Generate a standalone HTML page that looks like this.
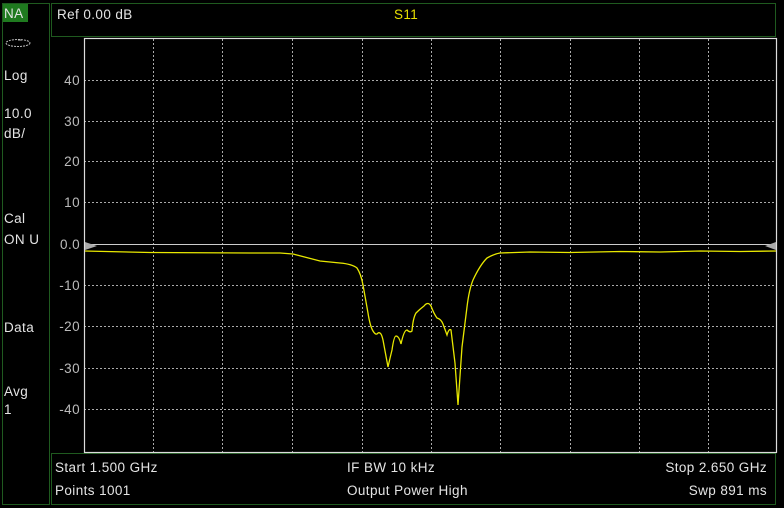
<!DOCTYPE html>
<html><head><style>
html,body{margin:0;padding:0;background:#000;width:784px;height:508px;overflow:hidden}
svg{display:block}
text{font-family:"Liberation Sans",sans-serif;font-size:13.5px;letter-spacing:0.4px;fill:#e4e4e4}
</style></head><body>
<svg width="784" height="508" viewBox="0 0 784 508">
<rect width="784" height="508" fill="#000"/>
<rect x="2.5" y="3.5" width="47" height="501" fill="none" stroke="#1f5a1f" stroke-width="1"/>
<rect x="3" y="4" width="25" height="18" fill="#1f7a1f"/>
<text x="4" y="18">NA</text>
<ellipse cx="18" cy="43" rx="12" ry="3.5" fill="none" stroke="#bbb" stroke-width="1" stroke-dasharray="2,1"/>
<line x1="18" y1="40" x2="22" y2="40" stroke="#bbb"/>
<text x="4" y="80">Log</text>
<text x="4" y="118">10.0</text>
<text x="4" y="138">dB/</text>
<text x="4" y="223">Cal</text>
<text x="4" y="244">ON U</text>
<text x="4" y="332">Data</text>
<text x="4" y="396">Avg</text>
<text x="4" y="414">1</text>
<rect x="51.5" y="3.5" width="724" height="33" fill="none" stroke="#1f5a1f"/>
<text x="57" y="19">Ref 0.00 dB</text>
<text x="394" y="19" style="fill:#e8e000">S11</text>
<rect x="51.5" y="453.5" width="724" height="51" fill="none" stroke="#1f5a1f"/>
<text x="55" y="472">Start 1.500 GHz</text>
<text x="55" y="495">Points 1001</text>
<text x="347" y="472">IF BW 10 kHz</text>
<text x="347" y="495">Output Power High</text>
<text x="767" y="472" text-anchor="end">Stop 2.650 GHz</text>
<text x="767" y="495" text-anchor="end">Swp 891 ms</text>
<g stroke="#aaa" stroke-width="1" stroke-dasharray="2,2">
<line x1="153.5" y1="39" x2="153.5" y2="452"/>
<line x1="222.5" y1="39" x2="222.5" y2="452"/>
<line x1="292.5" y1="39" x2="292.5" y2="452"/>
<line x1="362.5" y1="39" x2="362.5" y2="452"/>
<line x1="431.5" y1="39" x2="431.5" y2="452"/>
<line x1="500.5" y1="39" x2="500.5" y2="452"/>
<line x1="570.5" y1="39" x2="570.5" y2="452"/>
<line x1="639.5" y1="39" x2="639.5" y2="452"/>
<line x1="708.5" y1="39" x2="708.5" y2="452"/>
<line x1="84" y1="80.5" x2="777" y2="80.5"/>
<line x1="84" y1="121.5" x2="777" y2="121.5"/>
<line x1="84" y1="161.5" x2="777" y2="161.5"/>
<line x1="84" y1="202.5" x2="777" y2="202.5"/>
<line x1="84" y1="285.5" x2="777" y2="285.5"/>
<line x1="84" y1="326.5" x2="777" y2="326.5"/>
<line x1="84" y1="368.5" x2="777" y2="368.5"/>
<line x1="84" y1="409.5" x2="777" y2="409.5"/>
</g>
<g style="font-size:12px;letter-spacing:0">
<text x="80" y="85" text-anchor="end" style="fill:#bbb">40</text>
<text x="80" y="126" text-anchor="end" style="fill:#bbb">30</text>
<text x="80" y="166" text-anchor="end" style="fill:#bbb">20</text>
<text x="80" y="207" text-anchor="end" style="fill:#bbb">10</text>
<text x="80" y="249" text-anchor="end" style="fill:#bbb">0.0</text>
<text x="80" y="290" text-anchor="end" style="fill:#bbb">-10</text>
<text x="80" y="331" text-anchor="end" style="fill:#bbb">-20</text>
<text x="80" y="373" text-anchor="end" style="fill:#bbb">-30</text>
<text x="80" y="414" text-anchor="end" style="fill:#bbb">-40</text>
</g>
<line x1="84" y1="244.5" x2="777" y2="244.5" stroke="#ccc" stroke-width="1"/>
<path fill="none" stroke="#e8e800" stroke-width="1.3" d="M84,251 L150,252.5 L250,253 L280,253 L293,254 L320,261 L340,263 Q352,264 357,268 Q361,274 363,285 L368,313 Q370,326 373,331 Q376,336 378,333 Q381,331 383,340 L388,367 Q390,358 392,350 Q394,336 396,336 Q399,336 401,344 Q404,330 407,330 Q410,333 412,331 Q413,318 416,313 Q420,309 424,306 Q428,301 431,306 Q434,314 437,318 Q441,319 443,324 L447,335 Q449,328 451,330 L455,363 L458,405 L462,347 L467,307 Q469,290 473,280 Q480,265 487,258 Q494,254 500,253 L530,252 L570,252.5 L620,251.5 L660,252 L700,251 L740,251.5 L777,251"/>
<polygon points="85,242 85,250 97,246" fill="#aaa"/>
<polygon points="776,242 776,250 765,246" fill="#aaa"/>
<rect x="84.5" y="38.5" width="692" height="414" fill="none" stroke="#ddd" stroke-width="1.2"/>
</svg>
</body></html>
